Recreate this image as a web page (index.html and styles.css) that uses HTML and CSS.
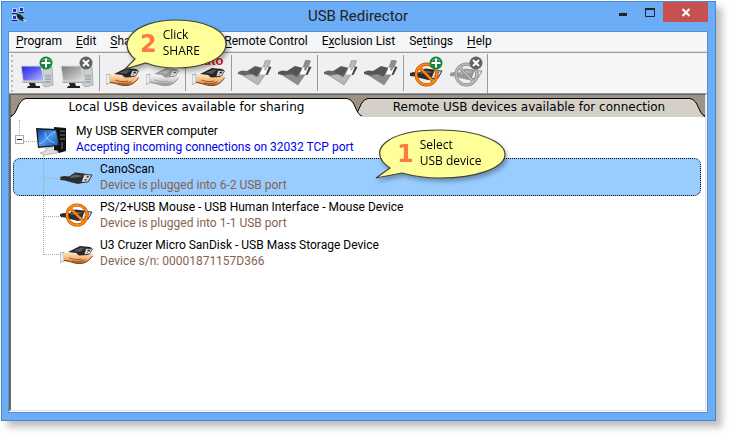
FILE: index.html
```
<!DOCTYPE html>
<html lang="en">
<head>
<meta charset="utf-8">
<title>USB Redirector</title>
<link rel="stylesheet" href="styles.css">
</head>
<body>
<svg class="defs" aria-hidden="true">
  <defs>
    <linearGradient id="blue" x1="0" y1="0" x2="1" y2="1"><stop offset="0" stop-color="#2a2ae0"/><stop offset=".45" stop-color="#5c5cf4"/><stop offset="1" stop-color="#b4c4ff"/></linearGradient>
    <linearGradient id="gray" x1="0" y1="0" x2="1" y2="1"><stop offset="0" stop-color="#777"/><stop offset="1" stop-color="#e4e4e4"/></linearGradient>
    <linearGradient id="skin" x1="0" y1="0" x2="0" y2="1"><stop offset="0" stop-color="#ffe4bc"/><stop offset=".6" stop-color="#f4b070"/><stop offset="1" stop-color="#a85a20"/></linearGradient>
    <linearGradient id="pale" x1="0" y1="0" x2="0" y2="1"><stop offset="0" stop-color="#f6f6f6"/><stop offset=".6" stop-color="#ccc"/><stop offset="1" stop-color="#8c8c8c"/></linearGradient>
    <linearGradient id="sky" x1="0" y1="0" x2="1" y2="1"><stop offset="0" stop-color="#1440a0"/><stop offset=".5" stop-color="#4a98ec"/><stop offset="1" stop-color="#1a50b0"/></linearGradient>
    <symbol id="plug" viewBox="0 0 34 16">
      <path d="M0 7 4 6l5 .5 6-4 9 1 3 1-2 8-7 1.500-8-2-5-1.500-5-.5z" fill="var(--plug,#2c2c2c)"/>
      <path d="M10 7l5-2.500 8 1.500-4 1-8 1z" fill="var(--shine,#666)"/>
      <path d="M24 4.500l8 .5-4 7-7 .5z" fill="var(--metal,#ddd)" stroke="var(--edge,#333)"/>
      <path d="M27 6l2 .3-.7 1.500-2-.2zM25 9l2 .2-.6 1.300-2-.1z" fill="var(--edge,#333)"/>
    </symbol>
    <symbol id="hand" viewBox="0 0 34 20">
      <path d="M0 8 4 7v9l-4 1.500z" fill="#e8eef4" stroke="#888" stroke-width=".6"/>
      <path d="M4 8.500c4-1.500 8-1.500 12 .5h14c3-1 4 .5 2.500 2.500-3 4-6 6.500-11 7-7 .5-10-2-17.500-2.500z" fill="var(--skin,url(#skin))"/>
      <path d="M4 15.500c6 0 9 3.500 17 3 5-.5 8-3 11.500-7.500" fill="none" stroke="var(--line,#7a4418)"/>
      <path d="M9 13c4 1 7 2.500 13 1M12 16c5 1.500 9 1 13-1.500" fill="none" stroke="var(--line,#8a4a18)" stroke-width=".8"/>
      <path d="M8 7l12-6 10 1 2 1-4 7-9 .5-3-2.500z" fill="var(--plug,#262626)"/>
      <path d="M13 6l8-3.500 4 .5-5 4z" fill="var(--shine,#555)"/>
      <path d="M26 3.500l6.500.5-3 5-5.500.5z" fill="var(--metal,#eee)" stroke="var(--edge,#333)" stroke-width=".8"/>
      <path d="M28 5l2 .2-.5 1-2-.1zM26.500 7.500h1.500" stroke="var(--edge,#333)" stroke-width=".6"/>
    </symbol>
    <symbol id="pc" viewBox="0 0 34 28">
      <path d="M23 5h9l1 18-8 2-2-2z" fill="#c8d0d0" stroke="#999" stroke-width=".7"/>
      <path d="M25 14h6M25 17h6M25 20h6" stroke="#889"/>
      <path d="M1 4h20l3 15H3z" fill="var(--screen)" stroke="#ddd"/>
      <path d="M2 19.500h22v1.500H3z" fill="#aaa"/>
      <path d="M9 21h6l1 3h4v2H7l1-2h2z" fill="#222"/>
    </symbol>
    <symbol id="switch" viewBox="0 0 34 28">
      <path d="M0 12l4-1.500 5 .5 8-5 8 2-3 10-8 1-7-3-7-2z" fill="var(--body,#666)"/>
      <path d="M5 15.500l9-1.500 5 3 5-7 4-11 4.500 2-5 13-7.500 11z" fill="var(--check,#b8b8b8)" stroke="#777" stroke-width=".5"/>
      <path d="M10 12l7-5 6 1-4 7-6-1z" fill="var(--body,#555)"/>
      <path d="M24.500 7.500h6.500l-2.500 7h-7z" fill="#fff"/>
      <path d="M31 6.500l2.500.5-4 8h-2z" fill="#444"/>
      <path d="M28 2l3 1-3 8-2-1z" fill="var(--check,#b8b8b8)"/>
    </symbol>
    <symbol id="add" viewBox="0 0 14 14"><circle cx="7" cy="7" r="6.500" fill="#14863c"/><path d="M3 5a5 5 0 0 1 8 0" stroke="#7ac890" fill="none"/><path d="M7 2.500v9M2.500 7h9" stroke="#fff" stroke-width="2"/></symbol>
    <symbol id="del" viewBox="0 0 14 14"><circle cx="7" cy="7" r="6.500" fill="#626262"/><path d="M4 4l6 6M10 4l-6 6" stroke="#fff" stroke-width="2"/></symbol>
    <symbol id="ban" viewBox="0 0 24 24"><circle cx="12" cy="12" r="10" fill="none" stroke="var(--ringedge,#b04c00)" stroke-width="3"/><path d="M5 5l14 14" stroke="var(--ringedge,#b04c00)" stroke-width="3"/><circle cx="12" cy="12" r="10" fill="none" stroke="var(--ring,#ff8a10)" stroke-width="1.800"/><path d="M5 5l14 14" stroke="var(--ring,#ff8a10)" stroke-width="1.800"/></symbol>
  </defs>
</svg>

<main class="window">
  <header class="titlebar">
    <svg class="app-icon" viewBox="0 0 16 16" aria-hidden="true">
      <path d="M1.500 1.500h4v4h-4zM8.500.500h4v4h-4zM1.500 8.500h4v4h-4z" fill="#1c38c8" stroke="#dde6ff" stroke-width=".8"/>
      <path d="M1 6.500h5M8 5.500h5M1 13.500h5" stroke="#223"/>
      <path d="M5.500 6.500l4 1 3 3 1 1-1.500 2.500-3-1-3-3z" fill="#222"/><path d="M12 12l3 2.500" stroke="#eee"/>
    </svg>
    <h1>USB Redirector</h1>
    <div class="controls">
      <button class="minimize" aria-label="Minimize"><svg viewBox="0 0 12 12"><path d="M2 8.500h8" stroke="#222" stroke-width="3"/></svg></button>
      <button class="maximize" aria-label="Maximize"><svg viewBox="0 0 12 12"><path d="M1.500 3v7.500h9V3" fill="none" stroke="#222"/><path d="M1 3h10" stroke="#222" stroke-width="2"/></svg></button>
      <button class="close" aria-label="Close"><svg viewBox="0 0 12 12"><path d="M2.500 3l7 7M9.500 3l-7 7" stroke="#fff" stroke-width="2"/></svg></button>
    </div>
  </header>

  <div class="client">
    <nav class="menu">
      <button><u>P</u>rogram</button>
      <button><u>E</u>dit</button>
      <button class="wide"><u>S</u>hare</button>
      <button><u>R</u>emote Control</button>
      <button>E<u>x</u>clusion List</button>
      <button>Se<u>t</u>tings</button>
      <button><u>H</u>elp</button>
    </nav>

    <div class="toolbar">
      <div class="tools">
        <span class="grip"></span>
        <button aria-label="Add server"><svg class="screen-blue" viewBox="0 0 36 36"><use href="#pc" x="1" y="7" width="34" height="28"/><use href="#add" x="20" y="1" width="14" height="14"/></svg></button>
        <button aria-label="Remove server"><svg class="screen-gray" viewBox="0 0 36 36"><use href="#pc" x="1" y="7" width="34" height="28"/><use href="#del" x="20" y="1" width="14" height="14"/></svg></button>
        <span class="sep"></span>
        <button aria-label="Share"><svg viewBox="0 0 36 36"><use href="#hand" x="1" y="12" width="34" height="20"/></svg></button>
        <button aria-label="Unshare"><svg class="off" viewBox="0 0 36 36"><use href="#hand" x="1" y="12" width="34" height="20"/></svg></button>
        <span class="sep"></span>
        <button class="auto"><span>auto</span><svg viewBox="0 0 36 36" aria-hidden="true"><use href="#hand" x="1" y="12" width="34" height="20"/></svg></button>
        <span class="sep"></span>
        <button aria-label="Connect"><svg viewBox="0 0 36 36"><use href="#switch" x="1" y="5" width="34" height="28"/></svg></button>
        <button aria-label="Disconnect"><svg class="dark" viewBox="0 0 36 36"><use href="#switch" x="1" y="5" width="34" height="28"/></svg></button>
        <span class="sep"></span>
        <button aria-label="Auto-connect"><svg viewBox="0 0 36 36"><use href="#switch" x="1" y="5" width="34" height="28"/></svg></button>
        <button aria-label="Stop auto-connect"><svg class="dark" viewBox="0 0 36 36"><use href="#switch" x="1" y="5" width="34" height="28"/></svg></button>
        <span class="sep"></span>
        <button aria-label="Exclude"><svg viewBox="0 0 36 36"><use href="#plug" x="1" y="11" width="34" height="16"/><use href="#ban" x="5" y="7" width="25" height="25"/><use href="#add" x="20" y="1" width="14" height="14"/></svg></button>
        <button aria-label="Remove exclusion"><svg class="off" viewBox="0 0 36 36"><use href="#plug" x="1" y="11" width="34" height="16"/><use href="#ban" x="5" y="7" width="25" height="25"/><use href="#del" x="20" y="1" width="14" height="14"/></svg></button>
      </div>
    </div>

    <div class="pane">
      <div class="tabs" role="tablist">
        <button class="tab active" role="tab" aria-selected="true">
          <svg viewBox="0 0 17 20"><path class="fill" d="M0 20C7 17 6 3 15 1.500h2V20z"/><path class="stroke" d="M0 19C7 17 6 3 15 1.500h2"/></svg>
          <span>Local USB devices available for sharing</span>
          <svg viewBox="0 0 17 20"><path class="fill" d="M17 20C10 17 11 3 2 1.500H0V20z"/><path class="stroke" d="M17 19C10 17 11 3 2 1.500H0"/></svg>
        </button>
        <button class="tab" role="tab" aria-selected="false">
          <svg viewBox="0 0 17 20"><path class="fill" d="M0 20C7 17 6 3 15 1.500h2V20z"/><path class="stroke" d="M0 19C7 17 6 3 15 1.500h2"/></svg>
          <span>Remote USB devices available for connection</span>
          <svg viewBox="0 0 17 20"><path class="fill" d="M17 20C10 17 11 3 2 1.500H0V20z"/><path class="stroke" d="M17 19C10 17 11 3 2 1.500H0"/></svg>
        </button>
      </div>

      <ul class="tree">
        <li>
          <div class="row root">
            <button class="toggle" aria-label="Collapse"></button>
            <svg class="server" viewBox="0 0 32 30" aria-hidden="true">
              <path d="M18 1l12 1v23l-7 2-5-3z" fill="#111"/><path d="M24 5l5 .5M24 9h5M24 13h5M26 16v7" stroke="#777"/>
              <path d="M0 2l21 1 3 17-22 2z" fill="#181818"/><path d="M1.500 3.500l18.500 1 2.500 14.500L3 20.500z" fill="url(#sky)"/>
              <path d="M3 18c7-2 8-9 16-12M9 6c0 6 4 9 10 11" stroke="#a0dcff" stroke-width=".7" fill="none"/>
              <path d="M10 22l6-1 1 3 5 1-1 2-13 2-4-2 6-2z" fill="#ddd" stroke="#999" stroke-width=".6"/>
            </svg>
            <p><b>My USB SERVER computer</b><span class="status">Accepting incoming connections on 32032 TCP port</span></p>
          </div>
          <ul class="devices">
            <li class="row selected">
              <svg viewBox="0 0 34 28" aria-hidden="true"><use href="#plug" x="0" y="7" width="34" height="16"/></svg>
              <p><b>CanoScan</b><span>Device is plugged into 6-2 USB port</span></p>
            </li>
            <li class="row">
              <svg viewBox="0 0 34 28" aria-hidden="true"><use href="#plug" x="0" y="6" width="34" height="16"/><use href="#ban" x="5" y="2" width="24" height="24"/></svg>
              <p><b>PS/2+USB Mouse - USB Human Interface - Mouse Device</b><span>Device is plugged into 1-1 USB port</span></p>
            </li>
            <li class="row">
              <svg viewBox="0 0 34 28" aria-hidden="true"><use href="#hand" x="0" y="6" width="34" height="20"/></svg>
              <p><b>U3 Cruzer Micro SanDisk - USB Mass Storage Device</b><span>Device s/n: 00001871157D366</span></p>
            </li>
          </ul>
        </li>
      </ul>
    </div>
  </div>

  <aside class="callout select">
    <svg viewBox="0 0 132 54" aria-hidden="true"><path d="M15 39C-9 23 9 1 65 1c36 0 65 11 65 24.500S101 49 65 49c-14 0-27-2-38-5L1 49z"/></svg>
    <strong>1</strong><p>Select<br>USB device</p>
  </aside>
  <aside class="callout share">
    <svg viewBox="0 0 104 54" aria-hidden="true"><path d="M11 40C-9 24 10 1 52 1c28 0 50 10 50 24S80 49 52 49c-11 0-21-1.500-30-5L1 50z"/></svg>
    <strong>2</strong><p>Click<br>SHARE</p>
  </aside>
</main>
</body>
</html>
```
FILE: styles.css
```
* { box-sizing: border-box; }
body {
  margin: 0;
  min-height: 100vh;
  display: flex;
  background: #fff;
  color: #000;
  font: 12px/16px Roboto, "Open Sans", sans-serif;
}
button { border: 0; padding: 0; background: none; font: inherit; color: inherit; }
ul { list-style: none; margin: 0; padding: 0; }
p { margin: 0; }
b { font-weight: 400; }
.defs { position: absolute; width: 0; height: 0; }

.window {
  position: relative;
  flex: 1;
  display: flex;
  flex-direction: column;
  margin: 1px 13px 13px 1px;
  padding: 0 7px 7px 6px;
  background: #6badf6;
  border: 1px solid #4a87c6;
  box-shadow: 6px 6px 7px rgba(0, 0, 0, .25);
}

.titlebar { display: grid; grid-template-columns: 1fr auto 1fr; height: 29px; }
.app-icon { width: 16px; height: 16px; margin: 5px 0 0 3px; }
h1 { margin: 3px 0 0; font-size: 15px; line-height: 22px; font-weight: 400; color: #222; }
.controls { display: flex; justify-content: flex-end; align-items: flex-start; }
.controls button { display: flex; justify-content: center; align-items: center; width: 27px; height: 20px; }
.controls svg { width: 12px; height: 12px; }
.controls .close { width: 45px; background: #c75050; }

.client {
  flex: 1;
  display: flex;
  flex-direction: column;
  border: 1px solid #5592d2;
  background: #f5f6f8;
}
.menu { display: flex; height: 20px; border-bottom: 1px solid #e0e0e0; }
.menu button { padding: 0 7px; line-height: 19px; white-space: nowrap; }
.menu .wide { width: 114px; text-align: left; }
.menu u { text-underline-offset: 2px; }

.toolbar { height: 42px; border-top: 1px solid #999; border-bottom: 1px solid #999; padding-top: 1px; }
.tools { display: flex; width: max-content; height: 100%; background: #f0f0f0; border-right: 1px solid #999; }
.grip { width: 8px; background: radial-gradient(circle at 2px 2px, #bbb 1px, transparent 1px) 1px 0 / 4px 5px repeat-y; }
.tools button { position: relative; width: 40px; height: 38px; padding: 1px 2px; }
.tools svg { display: block; width: 36px; height: 36px; }
.sep { width: 6px; padding-left: 2px; }
.sep::before { content: ""; display: block; width: 1px; height: 36px; margin-top: 1px; background: #999; }
.auto span { position: absolute; top: 0; left: 7px; font: 700 13px/14px "Liberation Sans", sans-serif; color: #e01010; }
.screen-blue { --screen: url(#blue); }
.screen-gray { --screen: url(#gray); }
.off { --plug: #999; --shine: #bbb; --metal: #eee; --edge: #888; --skin: url(#pale); --line: #999; --ring: #b8b8b8; --ringedge: #888; }
.dark { --check: #8c8c8c; --body: #555; }

.pane { flex: 1; margin: 0 1px 1px 0; border: 1px solid #e3e3e3; border-top-color: #666; border-left: 2px solid #696969; background: #fff; }
.tabs { display: flex; height: 22px; padding-top: 2px; background: #9c9286; border-bottom: 1px solid #000; }
.tab { display: flex; height: 20px; font: 12px/20px "DejaVu Sans", sans-serif; white-space: nowrap; --face: #d4d0c8; }
.tab svg { width: 17px; height: 20px; flex: none; overflow: visible; }
.tab span { flex: 1; height: 19px; text-align: center; background: var(--face); margin-top: 1px; border-top: 1px solid #000; line-height: 17px; }
.tab .fill { fill: var(--face); }
.tab .stroke { fill: none; stroke: #000; }
.tab.active { position: relative; z-index: 1; flex: 351; --face: #fff; }
.tab.active { box-shadow: 0 1px #fff; }
.tab:not(.active) { flex: 352; margin-left: -9px; }

.tree { padding: 3px 4px 0 2px; }
.row { position: relative; display: flex; height: 38px; padding-top: 3px; }
.row b, .row p span { display: block; white-space: nowrap; }
.row p span { color: #85644f; }
.row p .status { color: #0000f0; }
.root { padding-left: 23px; }
.root p { margin-left: 8px; }
.root::before { content: ""; position: absolute; left: 6px; top: 0; width: 17px; height: 21px; border-left: 1px dotted #aaa; border-bottom: 1px dotted #aaa; }
.server { width: 32px; height: 30px; margin-top: 3px; }
.toggle { position: absolute; left: 2px; top: 15px; width: 9px; height: 9px; border: 1px solid #aaa; background: linear-gradient(#222, #222) 1px 3px / 5px 1px no-repeat #fff; }
.devices .row { padding-top: 2px; padding-left: 46px; border: 1px dotted transparent; border-radius: 7px; }
.devices .row svg { width: 34px; height: 28px; margin-top: 2px; }
.devices .row p { margin-left: 6px; }
.devices .row::before { content: ""; position: absolute; left: 29px; top: -19px; width: 17px; height: 38px; border-left: 1px dotted #aaa; border-bottom: 1px dotted #aaa; }
.devices .selected::before { top: -4px; height: 23px; }
.devices .selected { background: #99ccff; border-color: #000; }

.callout { position: absolute; display: flex; height: 54px; filter: drop-shadow(2px 3px 2px rgba(0, 0, 0, .3)); }
.callout svg { position: absolute; inset: 0; width: 100%; height: 100%; }
.callout path { fill: #ffff99; stroke: #444430; stroke-width: 1.2; }
.callout strong { position: relative; margin-top: 11px; font: 700 24px/28px "DejaVu Sans", sans-serif; color: #ff7846; }
.callout p { position: relative; margin: 8px 0 0 6px; font-family: "Open Sans", sans-serif; }
.share { left: 122px; top: 17px; width: 104px; padding-left: 16px; }
.select { left: 373px; top: 127px; width: 132px; padding-left: 22px; }
```
